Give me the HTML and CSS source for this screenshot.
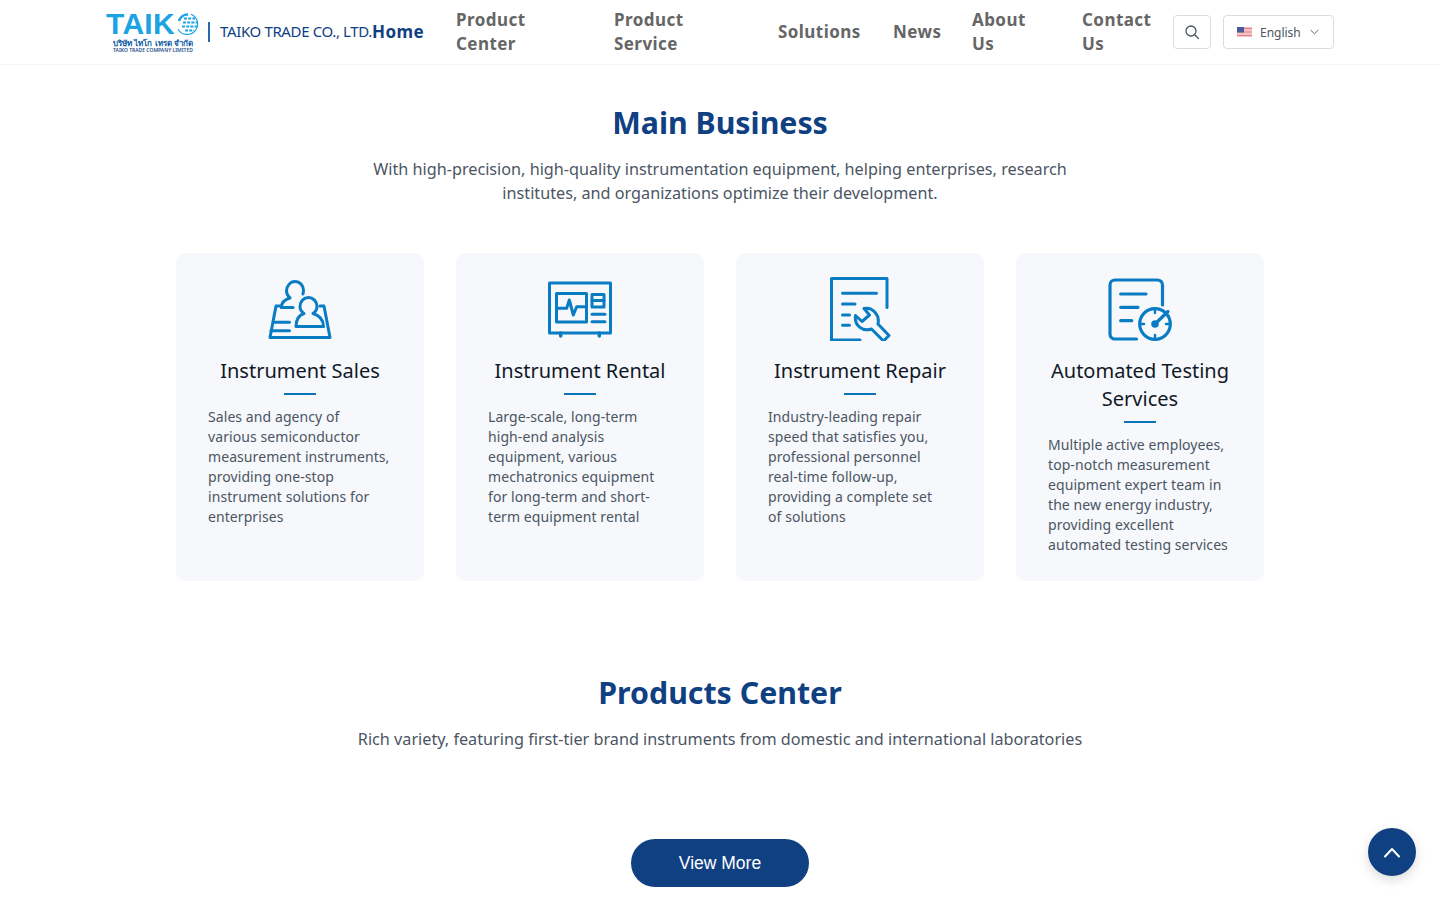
FILE: index.html
```html
<!DOCTYPE html>
<html lang="en">
<head>
<meta charset="utf-8">
<title>TAIKO TRADE CO., LTD.</title>
<link rel="stylesheet" href="styles.css">
</head>
<body>
<header class="header">
  <div class="header-inner">
    <a class="brand" href="#">
      <span class="logo">
        <span class="logo-top"><span class="logo-word">TAIK</span>
          <svg class="logo-globe" viewBox="0 0 24 24" fill="none" stroke="#1ba3e4">
            <path d="M16 2.200a10.500 10.500 0 1 1-13 15" stroke-width="1.200"/>
            <path d="M4 9a9 9 0 0 1 9-6.500" stroke-width="2.600"/>
            <path d="M8 10.500h15M7 14.500h15M9 6.500h11M10 18.500h9" stroke-width="2.200" stroke-dasharray="3 1.200"/>
          </svg>
        </span>
        <span class="logo-thai">บริษัท ไทโก เทรด จำกัด</span>
        <span class="logo-en">TAIKO TRADE COMPANY LIMITED</span>
      </span>
      <span class="brand-sep"></span>
      <span class="brand-name">TAIKO TRADE CO., LTD.</span>
    </a>
    <nav class="nav">
      <a class="nav-item nav-active" href="#">Home</a>
      <a class="nav-item nav-wide" href="#">Product Center</a>
      <a class="nav-item nav-wider" href="#">Product Service</a>
      <a class="nav-item nav-solutions" href="#">Solutions</a>
      <a class="nav-item nav-news" href="#">News</a>
      <a class="nav-item nav-about" href="#">About Us</a>
      <a class="nav-item nav-contact" href="#">Contact Us</a>
    </nav>
    <button class="search-btn" type="button" aria-label="Search">
      <svg viewBox="0 0 16 16" width="16" height="16" fill="none" stroke="#4b5563" stroke-width="1.300" stroke-linecap="round"><circle cx="7" cy="7" r="5"/><path d="M10.700 10.700l3.800 3.800"/></svg>
    </button>
    <button class="lang-btn" type="button">
      <svg class="flag" viewBox="0 0 15 10" width="15" height="10"><rect width="15" height="10" fill="#f5c4c7"/><path d="M0 1.500h15M0 5h15M0 8.500h15" stroke="#e77f88" stroke-width="1.100"/><rect width="7" height="5.500" fill="#4a5a9a"/></svg>
      <span>English</span>
      <svg viewBox="0 0 10 6" width="9" height="6" fill="none" stroke="#4b5563" stroke-width="1"><path d="M.7.800L5 5l4.300-4.200"/></svg>
    </button>
  </div>
</header>

<main>
  <section class="section section-business">
    <h2 class="section-title">Main Business</h2>
    <p class="section-sub section-sub-narrow">With high-precision, high-quality instrumentation equipment, helping enterprises, research institutes, and organizations optimize their development.</p>
    <div class="cards">
      <article class="card">
        <svg class="card-icon" viewBox="0 0 64 64" fill="none" stroke="#0a7cc4" stroke-width="3" stroke-linecap="round" stroke-linejoin="round">
          <path d="M13.500 30.500c0-4.500 3-8 8.500-9.500-2.200-1.800-3.500-4.200-3.500-7 0-5 3.800-9.500 8.500-9.500 4.800 0 8.500 4 8.500 9 0 1-.2 2-.6 3.500"/>
          <path d="M13.500 30.500H25"/>
          <path d="M13.500 29H8L2 60.500h60L56 29h-4"/>
          <path d="M28 49.500h27.500c0-7-4-11-10.500-13 2.800-1.800 4-4.300 4-7 0-5-3.800-9-8.500-9s-8.500 4-8.500 9c0 2.700 1.200 5.200 4 7-6 2-8 6-8 13z"/>
          <path d="M7 45.300h14.500M3 53.700h18.500"/>
        </svg>
        <h3 class="card-title">Instrument Sales</h3>
        <span class="card-rule"></span>
        <p class="card-text">Sales and agency of various semiconductor measurement instruments, providing one-stop instrument solutions for enterprises</p>
      </article>
      <article class="card">
        <svg class="card-icon" viewBox="0 0 64 64" fill="none" stroke="#0a7cc4" stroke-width="3" stroke-linejoin="round" stroke-linecap="round">
          <rect x="1.500" y="6" width="61" height="50"/>
          <rect x="8.500" y="16.500" width="30" height="28.500"/>
          <path d="M10.500 31.300h8.200l2.600-8.300 4 15 3.400-8.300H37"/>
          <rect x="44" y="17.500" width="12" height="12.500"/>
          <path d="M44 23.500h12M44 37.300h13M44 44.700h13"/>
          <path d="M12.700 56v3M51.300 56v3" stroke-width="3.500"/>
        </svg>
        <h3 class="card-title">Instrument Rental</h3>
        <span class="card-rule"></span>
        <p class="card-text">Large-scale, long-term high-end analysis equipment, various mechatronics equipment for long-term and short-term equipment rental</p>
      </article>
      <article class="card">
        <svg class="card-icon" viewBox="0 0 64 64" fill="none" stroke="#0a7cc4" stroke-width="3" stroke-linejoin="round" stroke-linecap="round">
          <path d="M32 63H3.500V1.500h55.500v29"/>
          <path d="M14.500 16.300h34M14.500 27H27M14.500 38h7M14.500 48.300h7"/>
          <path d="M36 31.500c8-2 16 6 14 15.500l11 11.500-5.500 5.500-12-12c-9 3-17.500-3.500-16-13.500l6.500 6 7.500-6.500z"/>
        </svg>
        <h3 class="card-title">Instrument Repair</h3>
        <span class="card-rule"></span>
        <p class="card-text">Industry-leading repair speed that satisfies you, professional personnel real-time follow-up, providing a complete set of&nbsp;solutions</p>
      </article>
      <article class="card">
        <svg class="card-icon" viewBox="0 0 64 64" fill="none" stroke="#0a7cc4" stroke-width="3.200" stroke-linecap="round" stroke-linejoin="round">
          <path d="M28.500 62H7a5 5 0 0 1-5-5V8a5 5 0 0 1 5-5h42.500a5 5 0 0 1 5 5v20"/>
          <path d="M12.700 17H38M12.700 30.300H30M12.700 43.700h11"/>
          <circle cx="47" cy="47" r="15.300"/>
          <path d="M47 32v4M32 47h4M58 47h4M47 58v4" stroke-width="2.400"/>
          <path d="M47 47l13-12.500"/>
          <circle cx="47" cy="47" r="2.200" fill="#0a7cc4"/>
        </svg>
        <h3 class="card-title">Automated Testing Services</h3>
        <span class="card-rule"></span>
        <p class="card-text">Multiple active employees, top-notch measurement equipment expert team in the new energy industry, providing excellent automated testing services</p>
      </article>
    </div>
  </section>

  <section class="section section-products">
    <h2 class="section-title">Products Center</h2>
    <p class="section-sub">Rich variety, featuring first-tier brand instruments from domestic and international laboratories</p>
    <a class="more-btn" href="#">View More</a>
  </section>
</main>

<button class="to-top" type="button" aria-label="Back to top">
  <svg viewBox="0 0 18 11" width="18" height="11" fill="none" stroke="#fff" stroke-width="2" stroke-linecap="round" stroke-linejoin="round"><path d="M2 9.500l7-7.500 7 7.500"/></svg>
</button>
</body>
</html>
```

FILE: styles.css
```css
* { box-sizing: border-box; }
html, body { margin: 0; padding: 0; }
body {
  font-family: "Noto Sans", "Noto Sans CJK SC", sans-serif;
  background: #fff;
  color: #111827;
  height: 900px;
  overflow: hidden;
}
a { text-decoration: none; color: inherit; }
button { font-family: inherit; cursor: pointer; background: #fff; }

.header { height: 65px; border-bottom: 1px solid #f3f4f6; background: #fff; }
.header-inner {
  width: 1228px;
  height: 64px;
  margin: 0 auto;
  display: flex;
  align-items: center;
}
.brand { display: flex; align-items: center; flex: none; }
.logo { width: 94px; display: flex; flex-direction: column; align-items: center; line-height: 1; }
.logo-top { display: flex; align-items: center; height: 26px; align-self: flex-start; }
.logo-word {
  font-family: "Liberation Sans", sans-serif;
  font-weight: 700;
  font-size: 30px;
  letter-spacing: .3px;
  color: #1ba3e4;
  line-height: 26px;
}
.logo-globe { width: 24px; height: 24px; flex: none; }
.logo-thai { font-size: 8px; font-weight: 600; line-height: 10px; height: 10px; margin-top: 1px; color: #0f5aa5; white-space: nowrap; }
.logo-en { font-size: 5px; line-height: 5px; height: 5px; color: #1f4f8b; white-space: nowrap; font-weight: 600; }
.brand-sep { width: 2px; height: 20px; background: #2a6aa8; margin: 0 10px 0 8px; }
.brand-name { font-size: 15px; color: #0f4082; white-space: nowrap; letter-spacing: -.36px; padding-bottom: 2px; }

.nav { display: flex; align-items: center; gap: 32px; margin-right: 23px; flex: none; }
.nav-item {
  font-size: 17px;
  font-weight: 700;
  line-height: 24px;
  letter-spacing: .45px;
  color: #666;
  display: block;
}
.nav-active { color: #0f4082; width: 52px; }
.nav-wide { width: 126px; }
.nav-wider { width: 132px; }
.nav-solutions { width: 83px; white-space: nowrap; }
.nav-news { width: 47px; white-space: nowrap; }
.nav-about { width: 78px; }
.nav-contact { width: 68px; }

.search-btn {
  width: 38px; height: 34px; flex: none;
  border: 1px solid #d9dce1; border-radius: 4px;
  display: flex; align-items: center; justify-content: center;
  padding: 0; margin-right: 12px;
}
.lang-btn {
  width: 111px; height: 34px; flex: none;
  border: 1px solid #d9dce1; border-radius: 4px;
  display: flex; align-items: center; gap: 8px;
  padding: 0 13px;
  font-size: 12px; color: #4b5563;
}
.lang-btn span { margin-right: 1px; }

.section { display: flex; flex-direction: column; align-items: center; }
.section-business { padding-top: 34px; }
.section-products { padding-top: 88px; }
.section-title {
  margin: 0;
  font-size: 30.300px;
  line-height: 48px;
  font-weight: 700;
  color: #0f4082;
}
.section-sub {
  margin: 10px 0 0;
  font-size: 16.220px;
  line-height: 24px;
  color: #4b5563;
  text-align: center;
}
.section-sub-narrow { width: 720px; }

.cards {
  margin-top: 48px;
  width: 1088px;
  display: grid;
  grid-template-columns: repeat(4, 1fr);
  gap: 32px;
}
.card {
  background: #f6f8fb;
  border-radius: 10px;
  padding: 24px 32px 26px;
  display: flex;
  flex-direction: column;
  align-items: center;
}
.card-icon { width: 64px; height: 64px; flex: none; display: block; }
.card-title {
  margin: 16px 0 0;
  font-size: 20px;
  line-height: 28px;
  font-weight: 400;
  color: #111827;
  text-align: center;
}
.card-rule { width: 32px; height: 2px; background: #0a74b8; margin-top: 8px; flex: none; }
.card-text {
  margin: 12px 0 0;
  width: 182px;
  align-self: flex-start;
  font-size: 14px;
  line-height: 20px;
  letter-spacing: .08px;
  color: #4b5563;
}

.more-btn {
  margin-top: 88px;
  width: 178px;
  height: 48px;
  border-radius: 24px;
  background: #0f4082;
  color: #fff;
  font-family: "Liberation Sans", sans-serif;
  font-size: 17.500px;
  display: flex;
  align-items: center;
  justify-content: center;
}
.to-top {
  position: fixed;
  right: 24px;
  bottom: 24px;
  width: 48px;
  height: 48px;
  border: 0;
  border-radius: 50%;
  background: #0f4082;
  box-shadow: 0 4px 12px rgba(0,0,0,.15);
  display: flex;
  align-items: center;
  justify-content: center;
  padding: 0;
}
```
